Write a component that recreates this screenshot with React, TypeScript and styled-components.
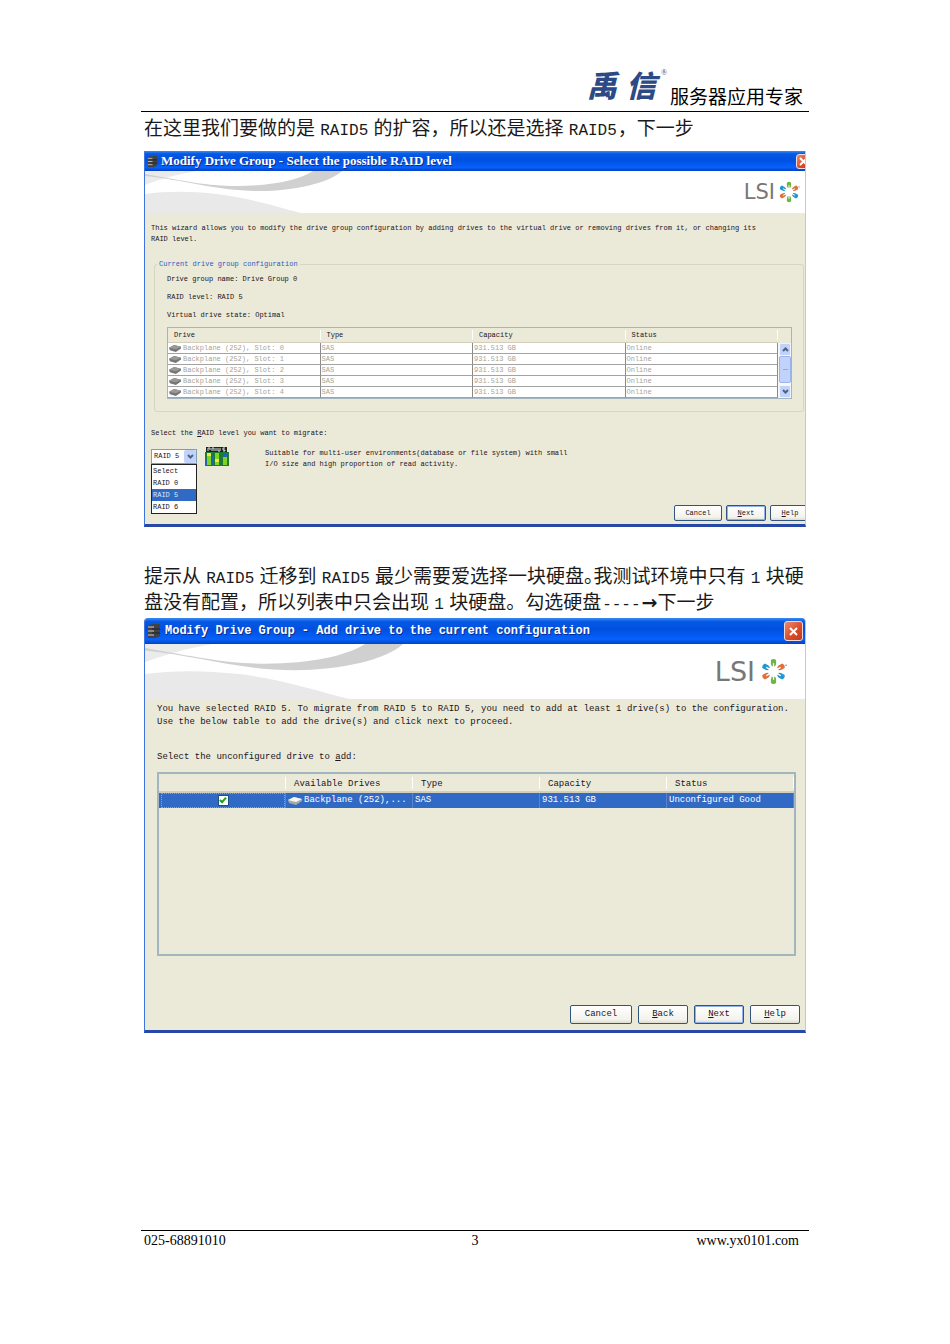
import React from 'react';
import styled, { createGlobalStyle, css } from 'styled-components';

const mono = '"Liberation Mono", "Noto Sans CJK SC", monospace';
const cjk = '"Noto Sans CJK SC", sans-serif';
const serif = '"Liberation Serif", "Noto Sans CJK SC", serif';

const GlobalStyle = createGlobalStyle`
  *, *::before, *::after { box-sizing: border-box; }
  body { margin: 0; background: #fff; color: #000; }
  p, fieldset, ul { margin: 0; padding: 0; }
  ul { list-style: none; }
`;

const Page = styled.div`
  display: flex;
  flex-direction: column;
  min-height: 100vh;
  padding: 64px 141px 94px;
  font-family: ${cjk};
`;

const Header = styled.header`
  display: flex;
  justify-content: flex-end;
  align-items: flex-end;
  height: 48px;
  padding-right: 6px;
  border-bottom: 1px solid #000;
`;

const Brand = styled.div`
  display: flex;
  gap: 9px;
  margin-bottom: 8px;
  color: #2c4a86;
  font-size: 30px;
  font-weight: 900;
  font-style: italic;
  line-height: 38px;
`;

const Registered = styled.sup`
  align-self: flex-start;
  margin: 0 3px 0 -4px;
  font: 8px/16px ${serif};
`;

const Slogan = styled.span`
  margin-bottom: 1px;
  font-size: 19px;
  line-height: 28px;
`;

const Main = styled.main`
  flex: 1;
  padding: 0 3px;
`;

const Paragraph = styled.p`
  color: #1a1a1a;
  font-size: 19px;
  line-height: 26px;
`;

const Intro = styled(Paragraph)`
  padding: 2px 0 11px;
`;

const Steps = styled(Paragraph)`
  margin-right: -3px;
  padding: 35px 0 4px;
`;

const Latin = styled.span`
  padding: 0 1px;
  font: 16px/16px ${mono};
`;

const HalfStop = styled.span`
  font-feature-settings: 'halt';
`;

const RightArrow = styled.span`
  font: 700 19px/19px "DejaVu Sans", sans-serif;
`;

type Sized = { $large?: boolean };

const Window = styled.section<Sized>`
  display: flex;
  flex-direction: column;
  overflow: hidden;
  min-height: ${(p) => (p.$large ? 415 : 376)}px;
  border: solid;
  border-width: 0 1px 3px;
  border-color: #3e74dc #c3c8d4 #2748a6 #3e74dc;
  border-radius: ${(p) => (p.$large ? '4px 4px 0 0' : '0')};
  background: #ebe9d8;
  color: #1c1420;
  font-family: ${mono};
  font-size: ${(p) => (p.$large ? 9 : 7)}px;
  line-height: ${(p) => (p.$large ? 13 : 11)}px;
`;

const TitleBar = styled.header<Sized>`
  display: flex;
  align-items: center;
  gap: ${(p) => (p.$large ? 4 : 3)}px;
  height: ${(p) => (p.$large ? 26 : 20)}px;
  padding-left: 2px;
  padding-right: ${(p) => (p.$large ? 2 : 0)}px;
  background: linear-gradient(#3c8cf4 0, #0558e4 14%, #0050e0 45%, #0562fb 82%, #0340c4 100%);
`;

const Title = styled.h2<Sized>`
  flex: 1;
  margin: 0;
  color: #fff;
  font-family: ${(p) => (p.$large ? mono : serif)};
  font-size: ${(p) => (p.$large ? 12 : 13)}px;
  line-height: 18px;
  text-shadow: 1px 1px 0 #0a2c8c;
  white-space: nowrap;
`;

const Close = styled.button<Sized>`
  display: flex;
  flex: none;
  align-items: center;
  justify-content: center;
  width: ${(p) => (p.$large ? 19 : 15)}px;
  height: ${(p) => (p.$large ? 20 : 15)}px;
  margin-right: ${(p) => (p.$large ? 0 : -6)}px;
  padding: 0;
  border: 1px solid #f3d9d4;
  border-radius: 3px;
  background: linear-gradient(135deg, #ec8a6c, #d8492a 60%, #c03c1c);
`;

const Banner = styled.div<Sized>`
  display: flex;
  justify-content: space-between;
  align-items: center;
  height: ${(p) => (p.$large ? 55 : 42)}px;
  padding-right: ${(p) => (p.$large ? 18 : 5)}px;
  background: #fff;
`;

const Swoosh = styled.svg`
  display: block;
  height: 100%;
`;

const Lsi = styled.div<Sized>`
  display: flex;
  align-items: center;
  gap: ${(p) => (p.$large ? 5 : 3)}px;
  color: #777;
  font-family: "DejaVu Sans", sans-serif;
  font-size: ${(p) => (p.$large ? 27 : 21)}px;
  line-height: 28px;
`;

const Body = styled.div<Sized>`
  display: flex;
  flex: 1;
  flex-direction: column;
  padding: ${(p) => (p.$large ? '4px 9px 6px 12px' : '10px 0 3px 6px')};
`;

const Group = styled.fieldset`
  margin: 14px 1px 0 3px;
  padding: 0 11px 12px 12px;
  border: 1px solid #d6d5c2;
  border-radius: 3px;
`;

const Legend = styled.legend`
  margin-left: -10px;
  padding: 0 2px;
  color: #2c5cc4;
`;

const Facts = styled.ul`
  padding-bottom: 3px;
  line-height: 18px;
`;

const TableFrame = styled.div<Sized>`
  display: flex;
  height: ${(p) => (p.$large ? 184 : 72)}px;
  overflow: hidden;
  border: ${(p) => (p.$large ? 2 : 1)}px solid #a3b6c0;
`;

const Table = styled.table<Sized>`
  flex: 1;
  align-self: flex-start;
  width: 100%;
  border-collapse: separate;
  border-spacing: 0;
  table-layout: fixed;
  font-size: inherit;

  th, td { text-align: left; white-space: nowrap; overflow: hidden; }
  th {
    height: ${(p) => (p.$large ? 19 : 15)}px;
    padding: 0 0 0 6px;
    border-bottom: ${(p) => (p.$large ? 2 : 1)}px solid #d3cdb9;
    background: linear-gradient(90deg, #fff, #fff) right center / 1px 70% no-repeat;
    font-weight: 400;
  }
  ${(p) =>
    p.$large
      ? css`
          th { padding: 3px 0 0 8px; }
          td { height: 15px; padding: 0 0 0 2px; border-right: 1px solid #5d83c4; background: #316ac5; color: #fff; }
        `
      : css`
          td { height: 11px; padding: 0 0 0 1px; border-right: 1px solid #8a8a8a; border-bottom: 1px solid #a3a3a3; background: #fff; color: #a5a597; line-height: 10px; }
        `}
`;

const DriveCell = styled.span`
  display: flex;
  align-items: center;
  gap: 2px;
`;

const CheckCell = styled.label`
  display: flex;
  align-items: center;
  justify-content: center;
  height: 15px;
  outline: 1px dotted #c89a50;
  outline-offset: -1px;
`;

const Tick = styled.input`
  appearance: none;
  width: 11px;
  height: 11px;
  margin: 0;
  border: 1px solid #1c5180;
  background: #fff;
  &:checked::after {
    content: '';
    display: block;
    width: 4px;
    height: 7px;
    margin: 0 auto;
    border: solid #21a121;
    border-width: 0 2px 2px 0;
    transform: rotate(42deg);
  }
`;

const ScrollBar = styled.div`
  display: flex;
  flex-direction: column;
  width: 13px;
  padding: 15px 0 0 1px;
  background: linear-gradient(#ebe9d8 15px, #f8f8f4 15px);
`;

const ScrollButton = styled.button`
  display: flex;
  align-items: center;
  justify-content: center;
  height: 13px;
  padding: 0;
  border: 1px solid #eef3ff;
  border-radius: 2px;
  background: #c1d3fb;
`;

const Thumb = styled.div`
  flex: 1;
  margin-bottom: 2px;
  border: 1px solid #98b4ee;
  border-radius: 2px;
  background: linear-gradient(#8faae6, #8faae6) center / 5px 1px no-repeat, #c1d3fb;
`;

const FieldLabel = styled.label<Sized>`
  display: block;
  margin-top: ${(p) => (p.$large ? 22 : 16)}px;
`;

const Choice = styled.div`
  display: flex;
  align-items: flex-start;
  margin-top: 8px;
`;

const Combo = styled.div`
  position: relative;
  width: 46px;
  margin: 2px 8px 0 0;
`;

const Select = styled.select`
  display: block;
  appearance: none;
  width: 100%;
  height: 15px;
  padding: 0 2px;
  border: 1px solid #7f9db9;
  border-radius: 0;
  background: #fff;
  color: inherit;
  font: inherit;
`;

const Arrow = styled.span`
  position: absolute;
  top: 1px;
  right: 1px;
  display: flex;
  align-items: center;
  justify-content: center;
  width: 12px;
  height: 13px;
  border-radius: 2px;
  background: #c1d3fb;
  pointer-events: none;
`;

const Menu = styled.ul`
  position: absolute;
  top: 15px;
  left: 0;
  width: 100%;
  border: 1px solid #222;
  background: #fff;
  line-height: 12px;
`;

const MenuItem = styled.li<{ $active?: boolean }>`
  padding-left: 1px;
  background: ${(p) => (p.$active ? '#316ac5' : '#fff')};
  color: ${(p) => (p.$active ? '#dfe8f8' : 'inherit')};
`;

const Hint = styled.p`
  margin-left: 36px;
  padding-top: 1px;
`;

const Actions = styled.div<Sized>`
  display: flex;
  justify-content: flex-end;
  gap: ${(p) => (p.$large ? 6 : 4)}px;
  margin-top: auto;
  margin-right: ${(p) => (p.$large ? -4 : -5)}px;
`;

const Action = styled.button<Sized & { $wide?: boolean; $primary?: boolean }>`
  width: ${(p) => (p.$large ? (p.$wide ? 62 : 50) : p.$wide ? 48 : 40)}px;
  height: ${(p) => (p.$large ? 19 : 16)}px;
  padding: 0;
  border: 1px solid #2f567f;
  border-radius: 2px;
  background: linear-gradient(#fff, #f3f2ec 80%, #dedccf);
  box-shadow: ${(p) => (p.$primary ? 'inset 0 0 0 1px #8fb2ee' : 'none')};
  color: inherit;
  font: inherit;
`;

const TableSpace = styled.div`
  margin-top: 8px;
`;

const Footer = styled.footer`
  display: grid;
  grid-template-columns: 1fr auto 1fr;
  padding: 0 3px;
  border-top: 1px solid #000;
  font: 14px/19px ${serif};
`;

const Site = styled.a`
  justify-self: end;
  padding-right: 7px;
  color: inherit;
  text-decoration: none;
`;

function BannerArt() {
  return (
    <Swoosh viewBox="0 0 200 42" aria-hidden="true">
      <path d="M0 0H52C34 3 18 7 0 14Z" fill="#ebebeb" />
      <path d="M0 3C40 10 62 15 92 15C126 15 154 9 168 0H197C184 12 150 20 114 20C72 20 40 9 0 5Z" fill="#d0d0d0" />
      <path d="M0 23C20 20 46 20 72 23C105 27 132 36 156 42H0Z" fill="#e9e9e9" />
    </Swoosh>
  );
}

function Burst({ size }: { size: number }) {
  const petals = [
    [0, '#6fb544'],
    [60, '#e0713c'],
    [120, '#2398d0'],
    [180, '#6fb544'],
    [240, '#e0713c'],
    [300, '#2398d0'],
  ] as const;
  return (
    <svg width={size} height={size} viewBox="-13 -13 26 26" aria-hidden="true">
      {petals.map(([angle, color]) => (
        <path
          key={angle}
          transform={`rotate(${angle})`}
          d="M-2.5 -11Q0 -13 2.5 -11V-7L1.6 -5H0.6V-8H-0.6V-5H-1.6L-2.5 -7Z"
          fill={color}
        />
      ))}
      <path d="M11 -6H13" stroke="#999" strokeWidth="1" />
    </svg>
  );
}

function StackIcon({ size }: { size: number }) {
  return (
    <svg width={size} height={size} viewBox="0 0 14 14" aria-hidden="true">
      <path d="M1 2L5 0H13V12L9 14H1Z" fill="#3f4248" />
      <path d="M1 3H7M1 7H7M1 11H7" stroke="#d4cfbe" strokeWidth="1" />
      <path d="M5 5H13M5 9H13" stroke="#1f2226" strokeWidth="1" />
    </svg>
  );
}

function DriveIcon({ light }: { light?: boolean }) {
  return (
    <svg width={light ? 14 : 12} height={light ? 10 : 9} viewBox="0 0 14 10" aria-hidden="true">
      <path d="M0 4L6 1L14 3V5L8 9L1 7Z" fill={light ? '#a9a9a4' : '#777'} />
      <path d="M0 4L6 1L14 3L8 6Z" fill={light ? '#f6f6f2' : '#999'} />
    </svg>
  );
}

function RaidIcon() {
  return (
    <svg width="24" height="20" viewBox="0 0 24 20" aria-hidden="true">
      <path d="M1 0H22V6H1Z" fill="#1d2420" />
      <path d="M3 4V1H5V3M7 4V1H9V4M11 1V4M13 1V4H15V1M20 1H18V3H20V4H18" stroke="#ddd" fill="none" />
      <path d="M0 5H24V19H0Z" fill="#1f7a34" />
      <path d="M2 6H6V18H2ZM10 6H14V18H10ZM18 6H22V18H18Z" fill="#7fd324" />
      <path d="M2 6H6V9H2ZM10 12H14V15H10Z" fill="#f0e63c" />
      <path d="M18 6H22V10H18ZM7 9H9V18H7ZM0 12H2V18H0Z" fill="#1c66b4" />
    </svg>
  );
}

function Chevron({ up }: { up?: boolean }) {
  return (
    <svg width="7" height="5" viewBox="0 0 7 5" aria-hidden="true">
      <path d={up ? 'M1 4L3.5 1.5L6 4' : 'M1 1L3.5 3.5L6 1'} fill="none" stroke="#4d6185" strokeWidth="2" />
    </svg>
  );
}

function WindowTop({ title, large }: { title: string; large?: boolean }) {
  return (
    <>
      <TitleBar $large={large}>
        <StackIcon size={large ? 14 : 11} />
        <Title $large={large}>{title}</Title>
        <Close $large={large} aria-label="Close">
          <svg width="11" height="11" viewBox="0 0 11 11" aria-hidden="true">
            <path d="M2 2L9 9M9 2L2 9" stroke="#fff" strokeWidth="2" />
          </svg>
        </Close>
      </TitleBar>
      <Banner $large={large}>
        <BannerArt />
        <Lsi $large={large}>
          LSI
          <Burst size={large ? 27 : 22} />
        </Lsi>
      </Banner>
    </>
  );
}

function RaidLevelWindow() {
  return (
    <Window>
      <WindowTop title="Modify Drive Group - Select the possible RAID level" />
      <Body>
        <p>
          This wizard allows you to modify the drive group configuration by adding drives to the virtual drive or removing drives from it, or changing its
          <br />
          RAID level.
        </p>
        <Group>
          <Legend>Current drive group configuration</Legend>
          <Facts>
            <li>Drive group name: Drive Group 0</li>
            <li>RAID level: RAID 5</li>
            <li>Virtual drive state: Optimal</li>
          </Facts>
          <TableFrame>
            <Table>
              <thead>
                <tr>
                  <th>Drive</th>
                  <th>Type</th>
                  <th>Capacity</th>
                  <th>Status</th>
                </tr>
              </thead>
              <tbody>
                {[0, 1, 2, 3, 4].map((slot) => (
                  <tr key={slot}>
                    <td>
                      <DriveCell>
                        <DriveIcon />
                        Backplane (252), Slot: {slot}
                      </DriveCell>
                    </td>
                    <td>SAS</td>
                    <td>931.513 GB</td>
                    <td>Online</td>
                  </tr>
                ))}
              </tbody>
            </Table>
            <ScrollBar>
              <ScrollButton aria-label="Scroll up">
                <Chevron up />
              </ScrollButton>
              <Thumb />
              <ScrollButton aria-label="Scroll down">
                <Chevron />
              </ScrollButton>
            </ScrollBar>
          </TableFrame>
        </Group>
        <FieldLabel htmlFor="raid-level">
          Select the <u>R</u>AID level you want to migrate:
        </FieldLabel>
        <Choice>
          <Combo>
            <Select id="raid-level" defaultValue="RAID 5">
              <option>Select</option>
              <option>RAID 0</option>
              <option>RAID 5</option>
              <option>RAID 6</option>
            </Select>
            <Arrow>
              <Chevron />
            </Arrow>
            <Menu>
              <MenuItem>Select</MenuItem>
              <MenuItem>RAID 0</MenuItem>
              <MenuItem $active>RAID 5</MenuItem>
              <MenuItem>RAID 6</MenuItem>
            </Menu>
          </Combo>
          <RaidIcon />
          <Hint>
            Suitable for multi-user environments(database or file system) with small
            <br />
            I/O size and high proportion of read activity.
          </Hint>
        </Choice>
        <Actions>
          <Action $wide>Cancel</Action>
          <Action $primary>
            <u>N</u>ext
          </Action>
          <Action>
            <u>H</u>elp
          </Action>
        </Actions>
      </Body>
    </Window>
  );
}

function AddDriveWindow() {
  return (
    <Window $large>
      <WindowTop large title="Modify Drive Group - Add drive to the current configuration" />
      <Body $large>
        <p>
          You have selected RAID 5. To migrate from RAID 5 to RAID 5, you need to add at least 1 drive(s) to the configuration.
          <br />
          Use the below table to add the drive(s) and click next to proceed.
        </p>
        <FieldLabel $large htmlFor="drive-252">
          Select the unconfigured drive to <u>a</u>dd:
        </FieldLabel>
        <TableSpace>
          <TableFrame $large>
            <Table $large>
              <thead>
                <tr>
                  <th aria-label="Selected" />
                  <th>Available Drives</th>
                  <th>Type</th>
                  <th>Capacity</th>
                  <th>Status</th>
                </tr>
              </thead>
              <tbody>
                <tr>
                  <td>
                    <CheckCell>
                      <Tick id="drive-252" type="checkbox" defaultChecked />
                    </CheckCell>
                  </td>
                  <td>
                    <DriveCell>
                      <DriveIcon light />
                      Backplane (252),...
                    </DriveCell>
                  </td>
                  <td>SAS</td>
                  <td>931.513 GB</td>
                  <td>Unconfigured Good</td>
                </tr>
              </tbody>
            </Table>
          </TableFrame>
        </TableSpace>
        <Actions $large>
          <Action $large $wide>
            Cancel
          </Action>
          <Action $large>
            <u>B</u>ack
          </Action>
          <Action $large $primary>
            <u>N</u>ext
          </Action>
          <Action $large>
            <u>H</u>elp
          </Action>
        </Actions>
      </Body>
    </Window>
  );
}

export default function App() {
  return (
    <Page>
      <GlobalStyle />
      <Header>
        <Brand>
          <span>禹</span>
          <span>信</span>
          <Registered>®</Registered>
        </Brand>
        <Slogan>服务器应用专家</Slogan>
      </Header>
      <Main>
        <Intro>
          在这里我们要做的是 <Latin>RAID5</Latin> 的扩容，所以还是选择 <Latin>RAID5</Latin>，下一步
        </Intro>
        <RaidLevelWindow />
        <Steps>
          提示从 <Latin>RAID5</Latin> 迁移到 <Latin>RAID5</Latin> 最少需要爱选择一块硬盘<HalfStop>。</HalfStop>我测试环境中只有 <Latin>1</Latin> 块硬盘没有配置，所以列表中只会出现 <Latin>1</Latin> 块硬盘。勾选硬盘<Latin>----</Latin><RightArrow>→</RightArrow>下一步
        </Steps>
        <AddDriveWindow />
      </Main>
      <Footer>
        <span>025-68891010</span>
        <span>3</span>
        <Site href="http://www.yx0101.com">www.yx0101.com</Site>
      </Footer>
    </Page>
  );
}
